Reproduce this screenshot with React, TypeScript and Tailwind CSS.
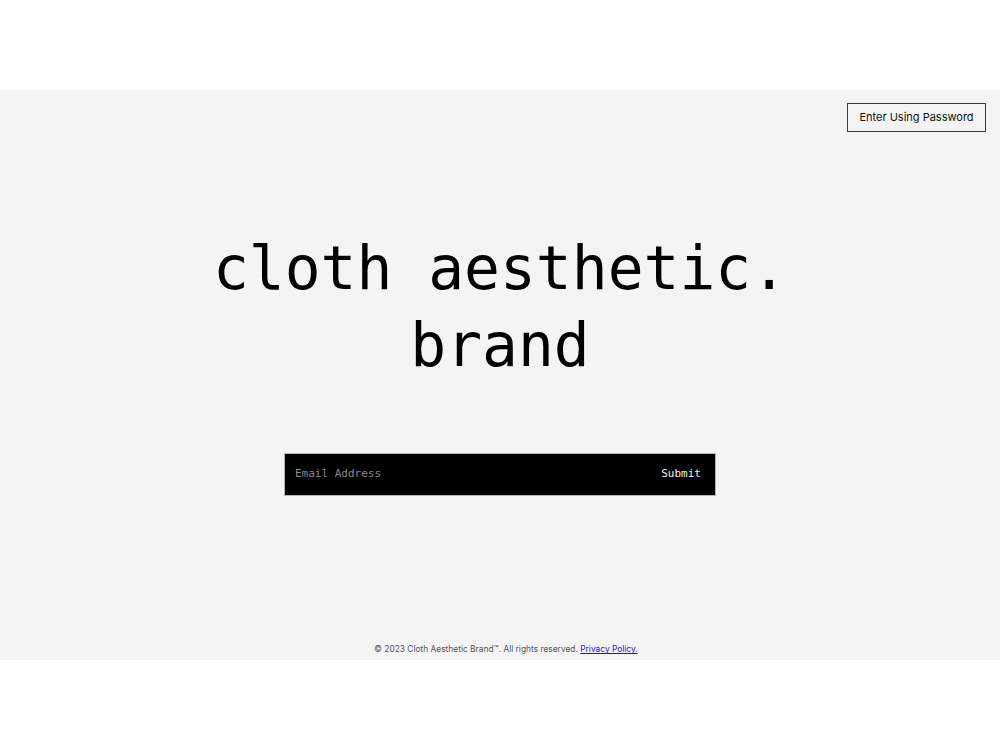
import React from 'react';

const App: React.FC = () => {
  return (
    <div className="w-[1000px] h-[750px] bg-white flex flex-col">
      <div className="h-[90px]" />
      <main className="h-[570px] bg-[#f4f4f4] flex flex-col">
        <div className="flex justify-end pt-[13px] pr-[14px]">
          <button className="w-[139px] h-[29px] flex items-center justify-center border border-[#3a3a3a] text-[11px] text-[#111] font-['Inter',sans-serif] bg-transparent">
            Enter Using Password
          </button>
        </div>

        <div className="flex flex-col items-center mt-[98px]">
          <h1 className="text-center text-[59.6px] leading-[77px] text-black font-['DejaVu_Sans_Mono','Liberation_Mono',monospace] font-normal">
            cloth aesthetic.
            <br />
            brand
          </h1>

          <form
            className="mt-[69px] w-[432px] h-[43px] bg-black border border-[#b9b2a6] flex items-center pl-[10px] pr-[14px]"
            onSubmit={(e) => e.preventDefault()}
          >
            <input
              type="email"
              placeholder="Email Address"
              className="flex-1 bg-transparent outline-none text-[11px] text-white placeholder:text-[#8a8a8a] font-['DejaVu_Sans_Mono','Liberation_Mono',monospace]"
            />
            <button type="submit" className="text-[11px] text-[#f2f2f2] font-['DejaVu_Sans_Mono','Liberation_Mono',monospace]">
              Submit
            </button>
          </form>
        </div>

        <footer className="mt-auto pb-[4px] pl-[12px] text-center text-[8.4px] text-[#555] font-['Inter',sans-serif]">
          © 2023 Cloth Aesthetic Brand™. All rights reserved.{' '}
          <a href="#" className="text-[#1a0dff] underline">
            Privacy Policy.
          </a>
        </footer>
      </main>
      <div className="flex-1" />
    </div>
  );
};

export default App;
